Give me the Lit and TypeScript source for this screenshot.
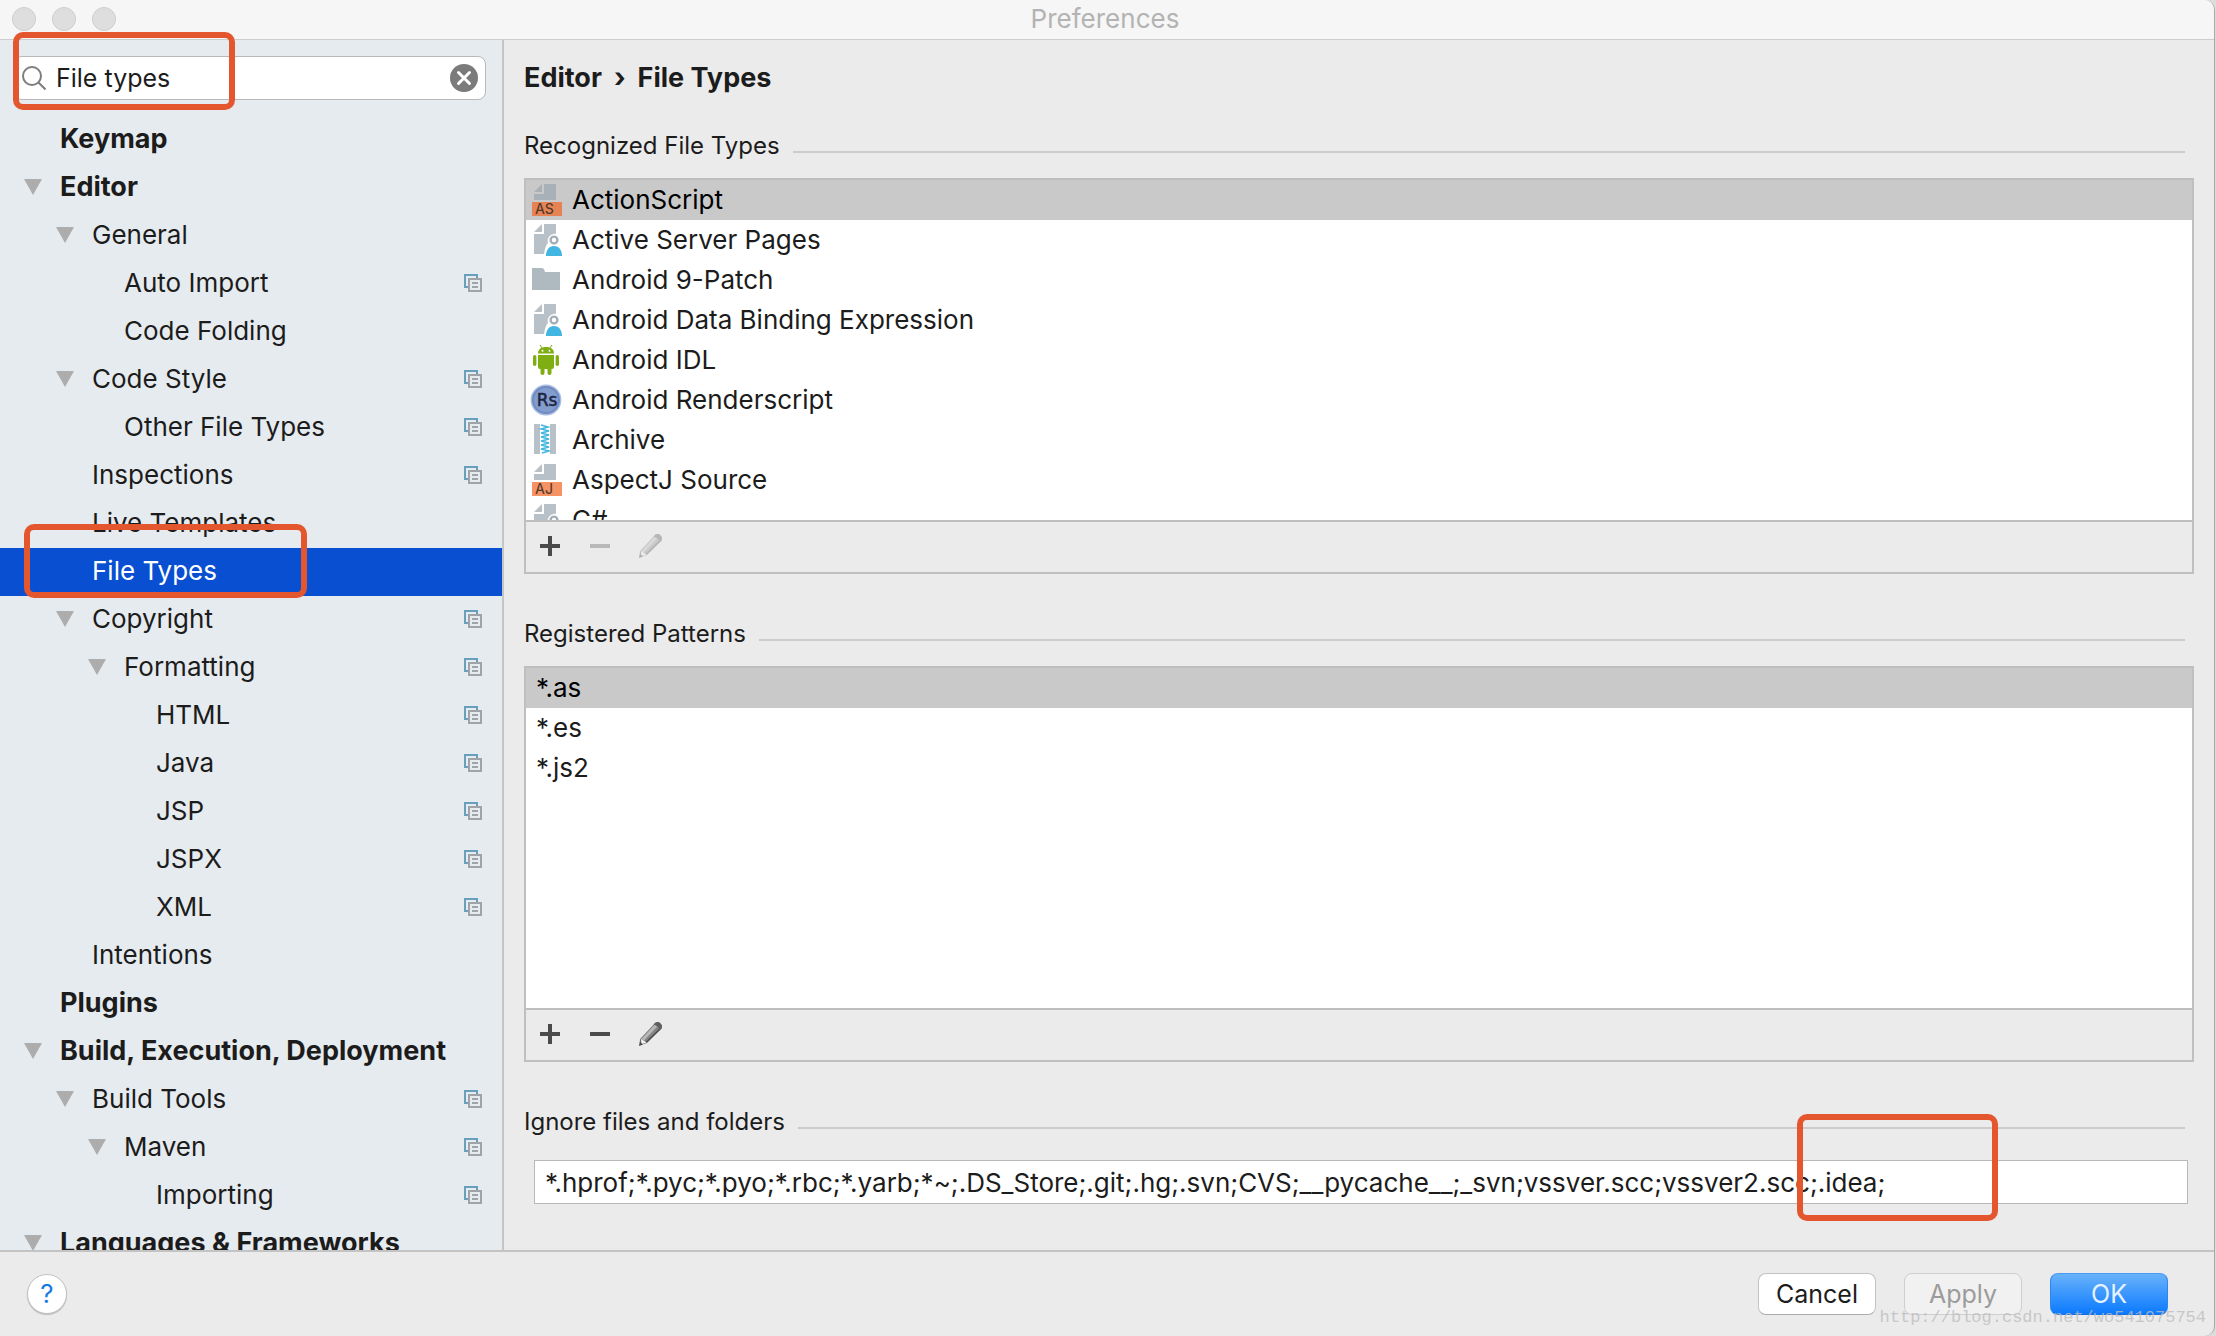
import { LitElement, html, css, svg, nothing, TemplateResult } from "lit";
import { customElement, property, state } from "lit/decorators.js";
import { classMap } from "lit/directives/class-map.js";

interface TreeNode {
  label: string;
  level: number;
  open?: boolean;
  shared?: boolean;
  marked?: boolean;
}

const TREE: TreeNode[] = [
  { label: "Keymap", level: 0 },
  { label: "Editor", level: 0, open: true },
  { label: "General", level: 1, open: true },
  { label: "Auto Import", level: 2, shared: true },
  { label: "Code Folding", level: 2 },
  { label: "Code Style", level: 1, open: true, shared: true },
  { label: "Other File Types", level: 2, shared: true },
  { label: "Inspections", level: 1, shared: true },
  { label: "Live Templates", level: 1 },
  { label: "File Types", level: 1, marked: true },
  { label: "Copyright", level: 1, open: true, shared: true },
  { label: "Formatting", level: 2, open: true, shared: true },
  { label: "HTML", level: 3, shared: true },
  { label: "Java", level: 3, shared: true },
  { label: "JSP", level: 3, shared: true },
  { label: "JSPX", level: 3, shared: true },
  { label: "XML", level: 3, shared: true },
  { label: "Intentions", level: 1 },
  { label: "Plugins", level: 0 },
  { label: "Build, Execution, Deployment", level: 0, open: true },
  { label: "Build Tools", level: 1, open: true, shared: true },
  { label: "Maven", level: 2, open: true, shared: true },
  { label: "Importing", level: 3, shared: true },
  { label: "Languages & Frameworks", level: 0, open: true },
];

interface FileType {
  label: string;
  icon: string;
}

const FILE_TYPES: FileType[] = [
  { label: "ActionScript", icon: "as" },
  { label: "Active Server Pages", icon: "user" },
  { label: "Android 9-Patch", icon: "folder" },
  { label: "Android Data Binding Expression", icon: "user" },
  { label: "Android IDL", icon: "android" },
  { label: "Android Renderscript", icon: "rs" },
  { label: "Archive", icon: "archive" },
  { label: "AspectJ Source", icon: "aj" },
  { label: "C#", icon: "user" },
];

const PATTERNS = ["*.as", "*.es", "*.js2"];

const tagged = (tag: string) => svg`
  <path d="M14 0H26V16H4V10H14Z" fill="#9aa7b0" fill-opacity=".7"/>
  <path d="M12 0V8H4Z" fill="#9aa7b0" fill-opacity=".7"/>
  <rect x="2" y="18" width="30" height="14" fill="#f26522" fill-opacity=".7"/>
  <text x="5" y="30" font-family="Inter, sans-serif" font-size="14" font-weight="500" fill="#231f20" fill-opacity=".75">${tag}</text>`;

const ICONS: Record<string, TemplateResult<2>> = {
  as: tagged("AS"),
  aj: tagged("AJ"),
  user: svg`
    <path d="M14 0H26V10A7 7 0 0 0 18 19Q15 22 14 30H4V10H14Z" fill="#b9c1c8"/>
    <path d="M12 0V8H4Z" fill="#b9c1c8"/>
    <circle cx="24" cy="16" r="3.4" fill="none" stroke="#a3afb8" stroke-width="2.4"/>
    <path d="M16 32C16 26 19 22 24 22S32 26 32 32Z" fill="#40b6e0"/>`,
  folder: svg`<path d="M2 4H12Q14 4 15 8H30V26H2Z" fill="#aeb9c0"/>`,
  android: svg`
    <path d="M10 1L12.500 4.500M22 1L19.500 4.500" stroke="#7ba81a" stroke-width="1"/>
    <path d="M8 9.500C8 5 11.500 3 16 3S24 5 24 9.500Z" fill="#7fae12"/>
    <circle cx="12.500" cy="6.800" r="1" fill="#fff"/><circle cx="19.500" cy="6.800" r="1" fill="#fff"/>
    <path d="M8 11H24V23A2 2 0 0 1 22 25H10A2 2 0 0 1 8 23Z" fill="#7fae12"/>
    <rect x="3" y="11" width="3.400" height="11" rx="1.700" fill="#7fae12"/>
    <rect x="25.600" y="11" width="3.400" height="11" rx="1.700" fill="#7fae12"/>
    <rect x="10.500" y="22" width="4" height="9" rx="2" fill="#7fae12"/>
    <rect x="17.500" y="22" width="4" height="9" rx="2" fill="#7fae12"/>`,
  rs: svg`
    <circle cx="16" cy="16" r="15.400" fill="#a9bce0"/>
    <circle cx="16" cy="16" r="14" fill="#6e8bc3"/>
    <circle cx="16" cy="16" r="12" fill="#839dce"/>
    <text x="17" y="22" text-anchor="middle" font-family="'DejaVu Sans', sans-serif" font-size="17" fill="#1c2540" stroke="#1c2540" stroke-width=".5">Rs</text>`,
  archive: svg`
    <rect x="4" y="0" width="6" height="30" fill="#b9c1c8"/>
    <rect x="20" y="0" width="6" height="30" fill="#b9c1c8"/>
    <path d="M11 1L18 3L11 5L19 7L11 9L19 11L11 13L19 15L11 17L19 19L11 21L19 23L11 25L19 27L12 29" fill="none" stroke="#40b6e0" stroke-width="1.500"/>`,
};

@customElement("pref-tree")
export class PrefTree extends LitElement {
  @state() private selected = "File Types";

  static styles = css`
    :host {
      display: block;
      flex: 1;
      min-height: 0;
      overflow: hidden;
    }
    .tree {
      list-style: none;
      margin: 0;
      padding: 0;
    }
    .node {
      position: relative;
    }
    .row {
      display: flex;
      align-items: center;
      width: 100%;
      height: 48px;
      padding: 0 20px 2px 24px;
      border: 0;
      background: none;
      color: #1c1c1c;
      font: inherit;
      text-align: left;
      cursor: default;
    }
    .row.top {
      font-size: 27px;
      font-weight: 700;
    }
    .row.selected {
      background: #084fd1;
      color: #fff;
    }
    .indent {
      flex: none;
      width: 32px;
    }
    .arrow {
      flex: none;
      width: 18px;
      height: 16px;
      margin-right: 18px;
      fill: #adadad;
    }
    .label {
      flex: 1;
      white-space: nowrap;
    }
    .shared {
      flex: none;
      width: 18px;
      height: 18px;
    }
    .callout {
      position: absolute;
      left: 24px;
      top: -24px;
      width: 283px;
      height: 74px;
      box-sizing: border-box;
      border: 6px solid #e4572e;
      border-radius: 10px;
      pointer-events: none;
      z-index: 1;
    }
  `;

  render() {
    return html`<ul class="tree" aria-label="Settings">
      ${TREE.map(
        (n) => html`<li class="node">
          <button
            class=${classMap({ row: true, top: n.level === 0, selected: n.label === this.selected })}
            @click=${() => (this.selected = n.label)}
          >
            ${Array.from({ length: n.level }, () => html`<span class="indent"></span>`)}
            <svg class="arrow" viewBox="0 0 18 16" aria-hidden="true">
              ${n.open ? svg`<path d="M0 0H18L9 16Z"/>` : nothing}
            </svg>
            <span class="label">${n.label}</span>
            ${n.shared
              ? html`<svg class="shared" viewBox="0 0 18 18" fill="none" stroke-width="2" aria-hidden="true">
                  <path d="M4 13H1V1H13V4" stroke="#6a9fbc" />
                  <path d="M5 5H17V17H5ZM8 9H14M8 13H14" stroke="#a0a4a8" />
                </svg>`
              : nothing}
          </button>
          ${n.marked ? html`<span class="callout"></span>` : nothing}
        </li>`
      )}
    </ul>`;
  }
}

@customElement("list-panel")
export class ListPanel extends LitElement {
  @property({ attribute: false }) items: FileType[] = [];
  @property() name = "";
  @property({ type: Boolean }) locked = false;
  @state() private selected = 0;

  static styles = css`
    :host {
      display: flex;
      flex-direction: column;
      flex: 1 1 0;
      min-height: 120px;
      box-sizing: border-box;
      border: 2px solid #bfbfbf;
      background: #fff;
    }
    .list {
      flex: 1;
      min-height: 0;
      overflow: hidden;
      list-style: none;
      margin: 0;
      padding: 0;
    }
    .item {
      display: flex;
      align-items: center;
      gap: 10px;
      width: 100%;
      height: 40px;
      padding: 0 4px;
      border: 0;
      background: none;
      color: #1c1c1c;
      font: inherit;
      text-align: left;
      cursor: default;
    }
    .item.plain {
      padding: 0 10px;
    }
    .item.selected {
      background: #c9c9c9;
      color: #000;
    }
    .icon {
      flex: none;
      width: 32px;
      height: 32px;
    }
    .tools {
      display: flex;
      gap: 2px;
      height: 50px;
      flex: none;
      border-top: 2px solid #bfbfbf;
      background: #ebebeb;
    }
    .tool {
      display: flex;
      align-items: center;
      justify-content: center;
      width: 48px;
      height: 48px;
      padding: 0;
      border: 0;
      background: none;
      color: #4a4a4a;
    }
    .tool:disabled {
      color: #b9b9b9;
    }
    .glyph {
      width: 24px;
      height: 24px;
    }
  `;

  private pencil() {
    const off = this.locked;
    return html`<svg class="glyph" viewBox="0 0 24 24" aria-hidden="true">
      <path d="M2 17L17 1Q20 -1 22.500 1.500T23.500 6.500L9 21L1.500 23.500Z" fill=${off ? "#c9c9c9" : "#858585"} />
      <path d="M3.500 17L17.500 2L20 3.500L6 18.500Z" fill=${off ? "#d9d9d9" : "#b9b9b9"} />
      <path d="M8 20.500L22.500 6.500" stroke=${off ? "#b4b4b4" : "#4c4c4c"} stroke-width="1.600" fill="none" />
      <path d="M17 1Q20 -1 22.500 1.500T23.500 6.500L21.500 8.500Q21 4 15.500 2.600Z" fill=${off ? "#b6b6b6" : "#606060"} />
      <path d="M3 17L8.500 20.500L3.500 22Z" fill=${off ? "#ececec" : "#f4f4f4"} />
      <path d="M2.500 17L1 24L5 22.500L2.600 20.500Z" fill=${off ? "#b0b0b0" : "#4c4c4c"} />
    </svg>`;
  }

  render() {
    return html`
      <ul class="list" aria-label=${this.name}>
        ${this.items.map(
          (it, i) => html`<li>
            <button
              class=${classMap({ item: true, plain: !it.icon, selected: i === this.selected })}
              @click=${() => (this.selected = i)}
            >
              ${it.icon
                ? html`<svg class="icon" viewBox="0 0 32 32" aria-hidden="true">${ICONS[it.icon]}</svg>`
                : nothing}
              <span>${it.label}</span>
            </button>
          </li>`
        )}
      </ul>
      <div class="tools">
        <button class="tool" aria-label="Add">
          <svg class="glyph" viewBox="0 0 24 24"><path d="M2 12H22M12 2V22" stroke="currentColor" stroke-width="4" /></svg>
        </button>
        <button class="tool" aria-label="Remove" ?disabled=${this.locked}>
          <svg class="glyph" viewBox="0 0 24 24"><path d="M2 12H22" stroke="currentColor" stroke-width="4" /></svg>
        </button>
        <button class="tool" aria-label="Edit" ?disabled=${this.locked}>${this.pencil()}</button>
      </div>
    `;
  }
}

@customElement("app-root")
export class AppRoot extends LitElement {
  @state() private query = "File types";

  static styles = css`
    :host {
      display: block;
      height: 100vh;
      box-sizing: border-box;
      padding-right: 1px;
      overflow: hidden;
      background: #dcdcdc;
      color: #1c1c1c;
      font-family: Inter, "Liberation Sans", sans-serif;
      font-size: 26px;
      line-height: 32px;
    }
    .window {
      display: flex;
      flex-direction: column;
      height: 100%;
      box-sizing: border-box;
      border-right: 1px solid #a8a8a8;
      border-radius: 0 10px 10px 0;
      overflow: hidden;
      background: #ebebeb;
      position: relative;
    }
    .titlebar {
      display: grid;
      grid-template-columns: 1fr auto 1fr;
      align-items: center;
      flex: none;
      height: 40px;
      box-sizing: border-box;
      padding: 0 16px 2px 12px;
      border-bottom: 1px solid #cdcdcd;
      background: #f6f6f6;
    }
    .lights {
      display: flex;
      gap: 16px;
    }
    .light {
      width: 24px;
      height: 24px;
      box-sizing: border-box;
      border: 1px solid #cecece;
      border-radius: 50%;
      background: #dedede;
    }
    .title {
      margin: 0;
      color: #b3b3b3;
      font-size: 26px;
      font-weight: 400;
    }
    .body {
      display: flex;
      flex: 1;
      min-height: 0;
    }
    .sidebar {
      display: flex;
      flex-direction: column;
      flex: none;
      width: 502px;
      border-right: 2px solid #c3c5c7;
      background: #e6ebef;
    }
    .search {
      position: relative;
      display: flex;
      align-items: center;
      flex: none;
      height: 44px;
      box-sizing: border-box;
      margin: 16px 16px 16px 14px;
      padding: 0 7px;
      border: 1px solid #b8b8b8;
      border-radius: 8px;
      background: #fff;
    }
    .lens {
      flex: none;
      width: 24px;
      height: 24px;
      margin-right: 10px;
    }
    .query {
      flex: 1;
      min-width: 0;
      padding: 0;
      border: 0;
      outline: 0;
      background: none;
      color: #1c1c1c;
      font: inherit;
      font-size: 25px;
    }
    .clear {
      flex: none;
      width: 28px;
      height: 28px;
      padding: 0;
      border: 0;
      background: none;
    }
    .clear svg {
      display: block;
    }
    .callout {
      position: absolute;
      box-sizing: border-box;
      border: 6px solid #e4572e;
      border-radius: 10px;
      pointer-events: none;
    }
    .callout.on-search {
      left: -2px;
      top: -25px;
      width: 222px;
      height: 78px;
    }
    .callout.on-ignore {
      left: 1263px;
      top: -46px;
      width: 201px;
      height: 107px;
    }
    .main {
      display: flex;
      flex-direction: column;
      flex: 1;
      min-width: 0;
      padding: 22px 20px 46px;
    }
    .crumbs {
      display: flex;
      gap: 12px;
      margin: 0 0 36px;
      font-size: 27px;
      font-weight: 700;
    }
    .heading {
      display: flex;
      align-items: center;
      gap: 13px;
      flex: none;
      margin: 0 9px 16px 0;
      font-size: 24px;
      font-weight: 400;
    }
    .heading::after {
      content: "";
      flex: 1;
      height: 2px;
      margin-top: 12px;
      background: #cccccc;
    }
    .heading.next {
      margin-top: 44px;
    }
    .heading.last {
      margin-bottom: 22px;
    }
    .ignore {
      position: relative;
      flex: none;
      display: flex;
      margin: 0 6px 0 10px;
    }
    .ignore-input {
      width: 100%;
      height: 44px;
      box-sizing: border-box;
      padding: 0 10px;
      border: 1px solid #b8b8b8;
      border-radius: 0;
      outline: 0;
      background: #fff;
      color: #1c1c1c;
      font: inherit;
    }
    .footer {
      display: flex;
      align-items: center;
      gap: 28px;
      flex: none;
      height: 86px;
      box-sizing: border-box;
      padding: 0 46px 0 27px;
      border-top: 2px solid #c3c3c3;
    }
    .help {
      width: 40px;
      height: 40px;
      margin-right: auto;
      padding: 0;
      border: 1px solid #c2c2c2;
      border-radius: 50%;
      background: #fff;
      box-shadow: 0 1px 1px #00000033;
      color: #1a7ae0;
      font: inherit;
    }
    .btn {
      width: 118px;
      height: 42px;
      padding: 0;
      border: 1px solid #c3c3c3;
      border-bottom-color: #acacac;
      border-radius: 8px;
      background: #fff;
      color: #1c1c1c;
      font: inherit;
      font-size: 25px;
    }
    .btn:disabled {
      border-color: #cfcfcf;
      background: #f1f1f1;
      color: #9b9b9b;
    }
    .btn.primary {
      border-color: #4a9af5 #2f86f0 #1a6fe0;
      background: linear-gradient(#69b2fb, #0b7aff);
      color: #e6f2ff;
    }
    .watermark {
      position: absolute;
      right: 8px;
      bottom: 8px;
      color: #bdbdbdcc;
      font-family: "Liberation Mono", monospace;
      font-size: 17px;
      line-height: 20px;
      pointer-events: none;
    }
  `;

  render() {
    return html`
      <div class="window">
        <header class="titlebar">
          <div class="lights">
            <span class="light"></span><span class="light"></span><span class="light"></span>
          </div>
          <h1 class="title">Preferences</h1>
        </header>
        <div class="body">
          <nav class="sidebar">
            <div class="search">
              <svg class="lens" viewBox="0 0 24 24" fill="none" stroke="#7d7d7d" stroke-width="2" aria-hidden="true">
                <circle cx="10" cy="10" r="9" />
                <path d="M16.500 16.500L23.500 23.500" />
              </svg>
              <input
                class="query"
                type="text"
                aria-label="Search settings"
                .value=${this.query}
                @input=${(e: Event) => (this.query = (e.target as HTMLInputElement).value)}
              />
              <button class="clear" aria-label="Clear search" @click=${() => (this.query = "")}>
                <svg width="28" height="28" viewBox="0 0 28 28">
                  <circle cx="14" cy="14" r="14" fill="#7b7b7b" />
                  <path d="M8.500 8.500L19.500 19.500M19.500 8.500L8.500 19.500" stroke="#fff" stroke-width="3" stroke-linecap="round" />
                </svg>
              </button>
              <span class="callout on-search"></span>
            </div>
            <pref-tree></pref-tree>
          </nav>
          <main class="main">
            <h2 class="crumbs"><span>Editor</span><span>›</span><span>File Types</span></h2>
            <h3 class="heading">Recognized File Types</h3>
            <list-panel name="Recognized File Types" locked .items=${FILE_TYPES}></list-panel>
            <h3 class="heading next">Registered Patterns</h3>
            <list-panel
              name="Registered Patterns"
              .items=${PATTERNS.map((label) => ({ label, icon: "" }))}
            ></list-panel>
            <label class="heading next last" for="ignore">Ignore files and folders</label>
            <div class="ignore">
              <input
                id="ignore"
                class="ignore-input"
                type="text"
                value="*.hprof;*.pyc;*.pyo;*.rbc;*.yarb;*~;.DS_Store;.git;.hg;.svn;CVS;__pycache__;_svn;vssver.scc;vssver2.scc;.idea;"
              />
              <span class="callout on-ignore"></span>
            </div>
          </main>
        </div>
        <footer class="footer">
          <button class="help" aria-label="Help">?</button>
          <button class="btn">Cancel</button>
          <button class="btn" disabled>Apply</button>
          <button class="btn primary">OK</button>
        </footer>
        <span class="watermark">http://blog.csdn.net/wo541075754</span>
      </div>
    `;
  }
}
